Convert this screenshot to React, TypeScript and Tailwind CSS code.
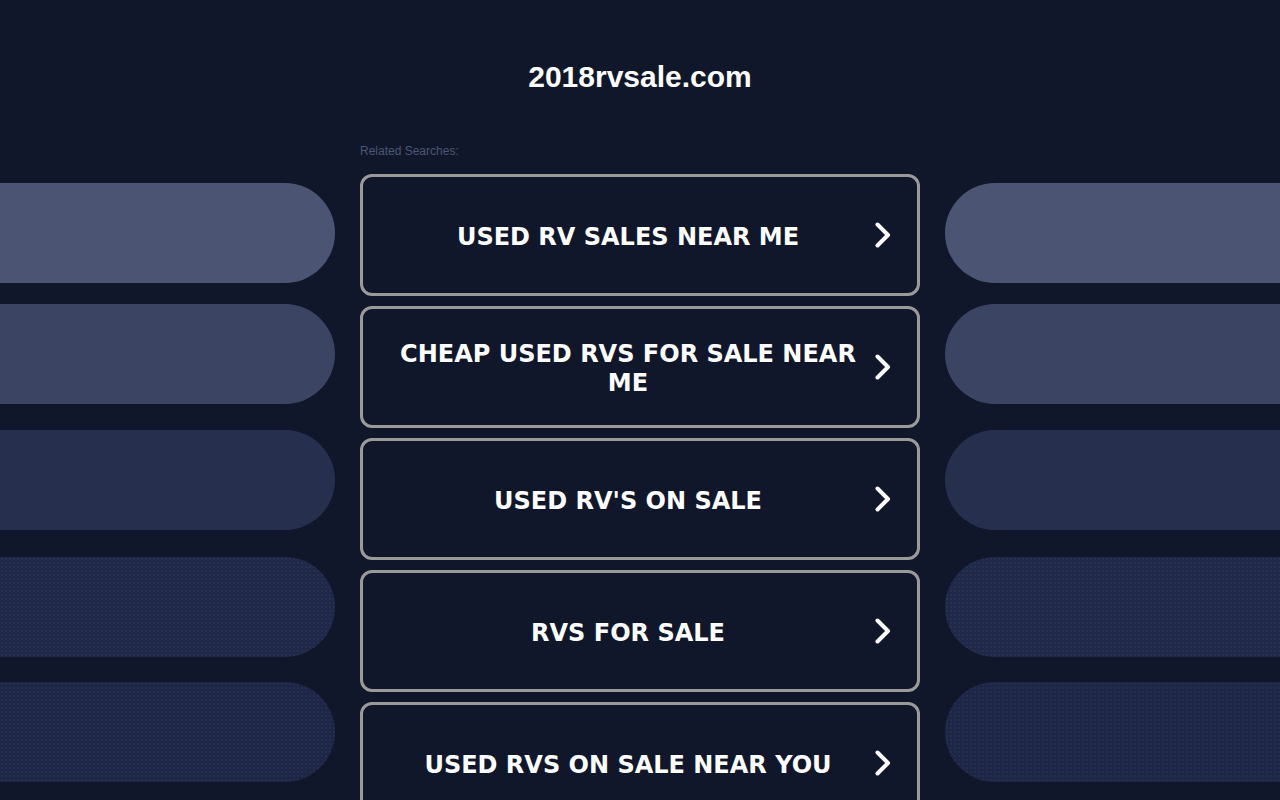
const LINKS = [
  'USED RV SALES NEAR ME',
  'CHEAP USED RVS FOR SALE NEAR ME',
  "USED RV'S ON SALE",
  'RVS FOR SALE',
  'USED RVS ON SALE NEAR YOU',
]

// decorative side pills, fading darker towards the bottom
const PILLS = [
  { mt: 'mt-0', bg: 'bg-[#4b5573]' },
  { mt: 'mt-[21px]', bg: 'bg-[#3b4462]' },
  { mt: 'mt-[26px]', bg: 'bg-[#272f4e]' },
  { mt: 'mt-[27px]', bg: 'bg-[#1f2849]' },
  { mt: 'mt-[25px]', bg: 'bg-[#1d2647]' },
]

const dots =
  'bg-[radial-gradient(rgba(255,255,255,0.035)_1px,transparent_1px)] bg-[length:4px_4px]'

function Pills({ side }: { side: 'left' | 'right' }) {
  return (
    <div className="flex w-[335px] shrink-0 flex-col pt-[183px]">
      {PILLS.map((p, i) => (
        <div
          key={i}
          className={`${p.mt} ${p.bg} ${i > 2 ? dots : ''} h-[100px] ${
            side === 'left' ? 'rounded-r-[50px]' : 'rounded-l-[50px]'
          }`}
        />
      ))}
    </div>
  )
}

function Chevron() {
  return (
    <svg viewBox="0 0 16 26" className="ml-[2px] h-[26px] w-[16px] shrink-0" fill="none">
      <polyline
        points="2.5,2.5 13,13 2.5,23.5"
        stroke="white"
        strokeWidth={4}
        strokeLinecap="round"
        strokeLinejoin="round"
      />
    </svg>
  )
}

export default function App() {
  return (
    <div className="flex h-[800px] w-[1280px] justify-between overflow-hidden bg-[#11172b]">
      <Pills side="left" />

      <div className="flex w-[560px] shrink-0 flex-col">
        <h1 className="pt-[60px] text-center font-['Liberation_Sans',Arial,sans-serif] text-[30px] leading-[34px] font-bold text-white">
          2018rvsale.com
        </h1>
        <p className="mt-[50px] font-['Liberation_Sans',Arial,sans-serif] text-[12px] leading-[14px] text-[#4b5675]">
          Related Searches:
        </p>
        <div className="mt-[16px] flex flex-col gap-[10px]">
          {LINKS.map((label) => (
            <a
              key={label}
              href="#"
              className="flex h-[122px] shrink-0 items-center rounded-[12px] border-[3px] border-[#9a9a9a] pr-[26px] pl-[20px]"
            >
              <span className="flex-1 pt-[4px] text-center font-['DejaVu_Sans',Verdana,sans-serif] text-[24px] leading-[29px] font-bold text-white">
                {label}
              </span>
              <Chevron />
            </a>
          ))}
        </div>
      </div>

      <Pills side="right" />
    </div>
  )
}
